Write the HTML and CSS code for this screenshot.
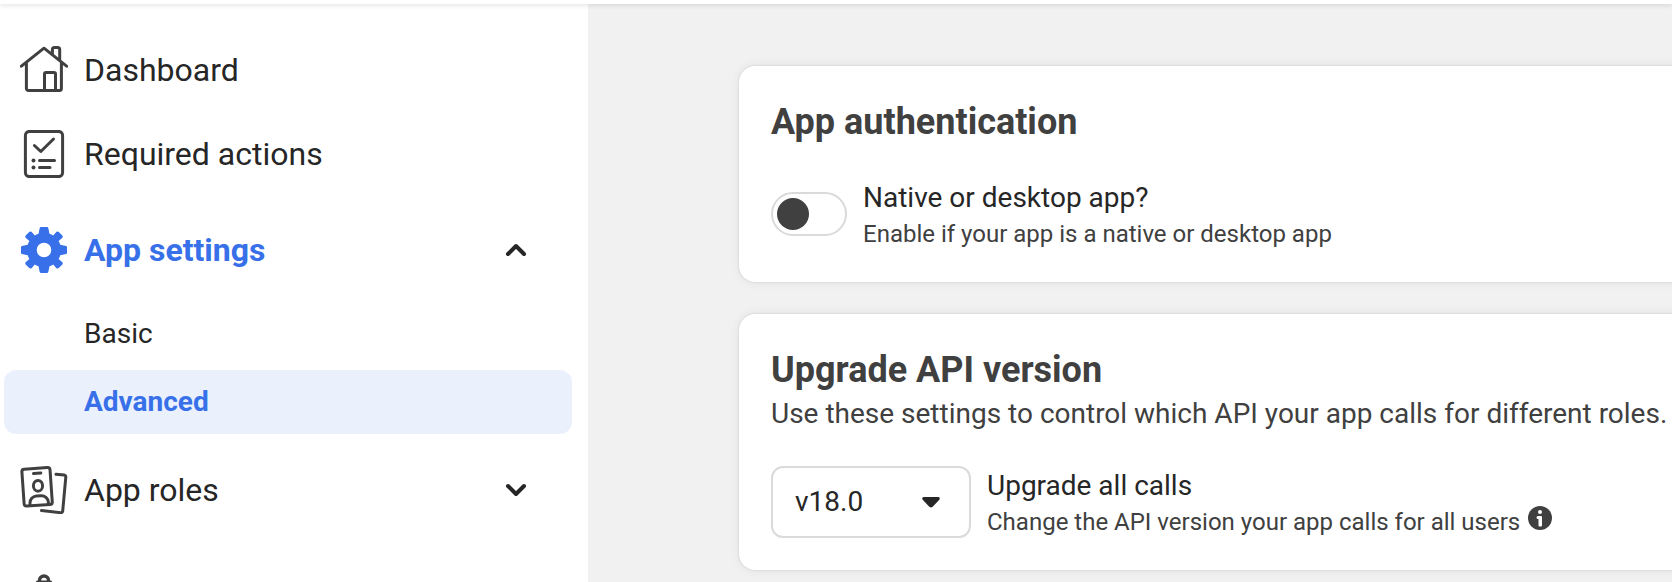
FILE: index.html
```
<!DOCTYPE html>
<html lang="en">
<head>
<meta charset="utf-8">
<title>App settings - Advanced</title>
<link rel="stylesheet" href="styles.css">
</head>
<body>
<header class="topbar"></header>
<div class="layout">
  <nav class="sidebar">
    <a class="item">
      <svg class="icon" viewBox="0 0 48 48"><path d="M1.4 20.2 24 2.2l22.6 18M6.4 17v25.5a2 2 0 0 0 2 2h31a2 2 0 0 0 2-2V17M32.4 8V3.500a2 2 0 0 1 2-2h3.300a2 2 0 0 1 2 2V14M24.500 44V28a1.600 1.600 0 0 1 1.600-1.600h7.800a1.600 1.600 0 0 1 1.600 1.600v16"/></svg>
      <span class="label">Dashboard</span>
    </a>
    <a class="item required">
      <svg class="icon" viewBox="0 0 48 48"><rect x="5.400" y="1.400" width="37.200" height="45.200" rx="4"/><path d="M14.400 15.500l6.400 6L33.500 9M19.500 30.600h15M19.500 37.500H30"/><circle class="dot" cx="13.500" cy="30.600" r="2"/><circle class="dot" cx="13.500" cy="37.500" r="2"/></svg>
      <span class="label">Required actions</span>
    </a>
    <a class="item settings">
      <svg class="icon gear" viewBox="0 0 48 48"><path fill-rule="evenodd" d="M21 1h6q1 0 1.300 1l1.200 5.800q2 .7 3.700 1.700l3.300-3.700q1.200-.8 2.300.1l3.500 3.600q.8 1.200.1 2.200l-3.800 3.400q1 1.700 1.700 3.700L46 20q1 .3 1 1v6q0 .8-1 1l-5.700 1.200q-.7 2-1.700 3.700l3.800 3.400q.7 1.100-.1 2.200l-3.500 3.600q-1.100.9-2.300.1l-3.300-3.700q-1.700 1-3.700 1.700L28.300 46q-.3 1-1.300 1h-6q-1 0-1.300-1l-1.200-5.800q-2-.7-3.700-1.700l-3.300 3.700q-1.200.8-2.300-.1l-3.500-3.600q-.8-1.100-.1-2.200l3.800-3.400q-1-1.700-1.700-3.700L2 28q-1-.2-1-1v-6q0-.7 1-1l5.700-1.200q.7-2 1.700-3.700l-3.800-3.400q-.7-1 .1-2.200l3.500-3.600q1.100-.9 2.300-.1l3.300 3.700q1.700-1 3.700-1.700L19.700 2q.3-1 1.300-1zM24 16.700a7.300 7.300 0 1 0 0 14.600 7.300 7.300 0 0 0 0-14.600z"/></svg>
      <span class="label active">App settings</span>
      <svg class="chevron" viewBox="0 0 24 24"><path d="M4 16l8-8 8 8"/></svg>
    </a>
    <a class="subitem">Basic</a>
    <a class="subitem selected">Advanced</a>
    <a class="item roles">
      <svg class="icon" viewBox="0 0 48 48"><rect x="3" y="2.300" width="28.200" height="37" rx="2.500" transform="rotate(-4 17 21)"/><path d="M13.500 7.600l7.300-.5M36 8.300l8.200.8a1.800 1.800 0 0 1 1.600 2l-3.100 34a1.800 1.800 0 0 1-2 1.600L21.500 44.600M10 39.200v-2a7 7 0 0 1 6.300-7.200l4.500-.3a7 7 0 0 1 7.600 6.500v2"/><ellipse cx="18" cy="19.800" rx="4.600" ry="5.400"/></svg>
      <span class="label">App roles</span>
      <svg class="chevron" viewBox="0 0 24 24"><path d="M4 8l8 8 8-8"/></svg>
    </a>
    <a class="item next">
      <svg class="icon bag" viewBox="0 0 48 48"><path d="M19.500 8V6.500a4.500 4.500 0 0 1 9 0V8M17.500 8.200h13v12h-13z"/></svg>
    </a>
  </nav>
  <main class="content">
    <section class="card auth">
      <h2 class="title">App authentication</h2>
      <div class="row">
        <span class="toggle"><span class="knob"></span></span>
        <div>
          <div class="name">Native or desktop app?</div>
          <div class="hint">Enable if your app is a native or desktop app</div>
        </div>
      </div>
    </section>
    <section class="card version">
      <h2 class="title">Upgrade API version</h2>
      <p class="desc">Use these settings to control which API your app calls for different roles.</p>
      <div class="row api-row">
        <div class="select"><span class="value">v18.0</span><svg class="caret" viewBox="0 0 20 12"><path d="M2.500 1h15q2 .8.800 2.800l-6.600 7q-1.700 1.500-3.400 0l-6.600-7Q.500 1.800 2.500 1z"/></svg></div>
        <div>
          <div class="name">Upgrade all calls</div>
          <div class="hint with-icon">Change the API version your app calls for all users<svg class="info" viewBox="0 0 24 24"><circle cx="12" cy="12" r="12"/><circle class="mark" cx="12" cy="6" r="2"/><path class="mark" d="M10 10h3a1 1 0 0 1 1 1v8.500a1 1 0 0 1-1 1h-1.500a1 1 0 0 1-1-1V13H10a1.500 1.500 0 0 1 0-3z"/></svg></div>
        </div>
      </div>
    </section>
  </main>
</div>
</body>
</html>
```
FILE: styles.css
```
* { box-sizing: border-box; }
body {
  margin: 0;
  height: 582px;
  overflow: hidden;
  display: flex;
  flex-direction: column;
  background: #f1f1f1;
  color: #262626;
  font-family: Roboto, sans-serif;
}
.topbar {
  position: relative;
  height: 4px;
  flex: none;
  background: #fff;
  box-shadow: 0 2px 4px rgba(0, 0, 0, .1);
}
.layout { display: flex; flex: 1; min-height: 0; }
.sidebar {
  width: 588px;
  flex: none;
  padding: 34px 16px 0 4px;
  overflow: hidden;
  background: #fff;
}
.item {
  display: flex;
  align-items: center;
  height: 64px;
  padding: 0 44px 0 16px;
  font-size: 32px;
  line-height: 40px;
}
.required { margin-top: 20px; }
.settings { margin-top: 32px; margin-bottom: 20px; }
.roles { margin-top: 24px; }
.next { margin-top: 44px; }
.icon {
  width: 48px;
  height: 48px;
  flex: none;
  margin-right: 16px;
  fill: none;
  stroke: #404040;
  stroke-width: 3;
  stroke-linecap: round;
  stroke-linejoin: round;
}
.dot { fill: #404040; stroke: none; }
.gear { fill: #3770e8; stroke: none; }
.bag { stroke-width: 3.4; }
.label { flex: 1; white-space: nowrap; }
.active { color: #3770e8; font-weight: 700; }
.chevron {
  width: 24px;
  height: 24px;
  fill: none;
  stroke: #262626;
  stroke-width: 4;
  stroke-linecap: round;
  stroke-linejoin: round;
}
.subitem {
  display: flex;
  align-items: center;
  height: 64px;
  margin-bottom: 4px;
  padding: 0 0 2px 80px;
  border-radius: 12px;
  font-size: 28px;
}
.selected {
  margin-bottom: 0;
  background: #eaf1fd;
  color: #3770e8;
  font-weight: 700;
}
.content { flex: 1; min-width: 0; padding: 62px 0 0 151px; overflow: hidden; }
.card {
  width: 1000px;
  padding: 32px;
  border-radius: 16px;
  background: #fff;
  box-shadow: 0 0 2px rgba(0, 0, 0, .16), 0 0 12px rgba(0, 0, 0, .07);
}
.auth { height: 216px; }
.version { height: 256px; margin-top: 32px; }
.title {
  margin: 0;
  color: #404040;
  font-size: 36px;
  font-weight: 700;
  line-height: 48px;
}
.row { display: flex; align-items: center; gap: 16px; white-space: nowrap; }
.auth .row { margin-top: 32px; }
.toggle {
  display: flex;
  align-items: center;
  width: 76px;
  height: 44px;
  padding-left: 4px;
  border: 2px solid #dadada;
  border-radius: 22px;
}
.knob { width: 32px; height: 32px; border-radius: 50%; background: #404040; }
.name { font-size: 28px; line-height: 40px; }
.hint { color: #404040; font-size: 24px; line-height: 32px; }
.desc {
  margin: 0;
  color: #404040;
  font-size: 28px;
  line-height: 40px;
  white-space: nowrap;
}
.api-row { margin-top: 32px; }
.select {
  display: flex;
  align-items: center;
  justify-content: space-between;
  width: 200px;
  height: 72px;
  padding: 0 28px 0 22px;
  border: 2px solid #dadada;
  border-radius: 12px;
  font-size: 28px;
}
.value { padding-bottom: 2px; }
.caret { width: 20px; height: 12px; fill: #262626; }
.with-icon { display: flex; align-items: center; }
.info { width: 24px; height: 24px; margin: -8px 0 0 8px; fill: #404040; }
.mark { fill: #fff; }
```
